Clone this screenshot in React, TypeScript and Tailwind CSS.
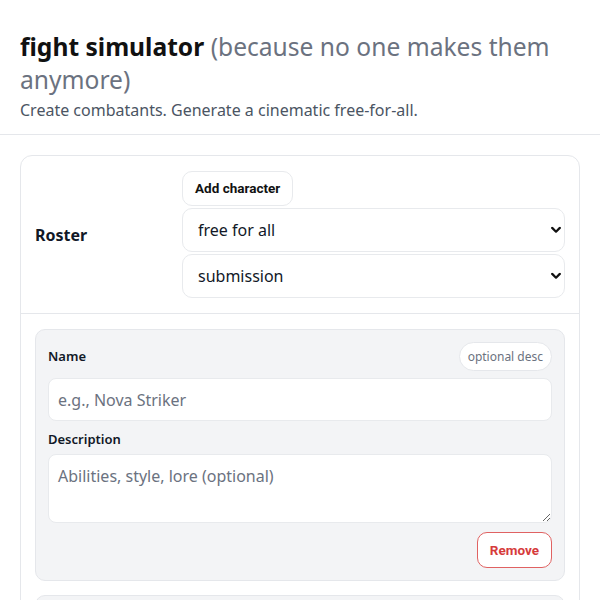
import React from "react";

const Chevron = () => (
  <svg
    className="pointer-events-none absolute right-[4px] top-1/2 -translate-y-1/2"
    width="10"
    height="7"
    viewBox="0 0 10 7"
    fill="none"
  >
    <path d="M1.2 1.4 5 5.2 8.8 1.4" stroke="#111" strokeWidth="2.2" strokeLinecap="round" strokeLinejoin="round" />
  </svg>
);

const Select = ({ value, options }: { value: string; options: string[] }) => (
  <div className="relative w-full">
    <select
      defaultValue={value}
      className="h-11 w-full appearance-none rounded-[10px] border border-[#e8eaed] bg-white pl-[15px] pr-8 text-base text-[#111827] outline-none"
    >
      {options.map((o) => (
        <option key={o}>{o}</option>
      ))}
    </select>
    <Chevron />
  </div>
);

const CharacterCard = () => (
  <div className="rounded-[10px] border border-[#e5e7eb] bg-[#f3f4f6] p-3">
    <div className="flex items-center justify-between">
      <label className="text-[13px] font-semibold text-[#111827]">Name</label>
      <button className="h-[29px] rounded-full border border-[#e5e7eb] bg-white px-2 text-xs text-[#6b7280]">
        optional desc
      </button>
    </div>
    <input
      placeholder="e.g., Nova Striker"
      className="mt-[7px] block h-[43px] w-full rounded-lg border border-[#e8eaed] bg-white pl-[9px] text-base outline-none placeholder:text-[#6b7280]"
    />
    <label className="mt-2 block text-[13px] font-semibold leading-5 text-[#111827]">Description</label>
    <textarea
      placeholder="Abilities, style, lore (optional)"
      className="mt-[5px] block h-[69px] w-full rounded-lg border border-[#e8eaed] bg-white px-[9px] py-[9px] text-base leading-6 outline-none placeholder:text-[#6b7280]"
    />
    <div className="mt-[9px] flex justify-end">
      <button className="h-9 rounded-[10px] border border-[#e06262] bg-white px-[12px] font-['Roboto',sans-serif] text-[13.5px] font-bold text-[#d63b3b]">
        Remove
      </button>
    </div>
  </div>
);

export default function App() {
  return (
    <div className="min-h-screen bg-white font-['Noto_Sans',sans-serif] text-[#111827]">
      <header className="border-b border-[#e5e7eb] px-5 pb-3 pt-[30px]">
        <h1 className="text-[24.6px] font-bold leading-[33px] text-[#111]">
          fight simulator{" "}
          <span className="font-normal text-[#6b7280]">(because no one makes them anymore)</span>
        </h1>
        <p className="mt-[2px] text-base leading-6 text-[#4b5563]">
          Create combatants. Generate a cinematic free-for-all.
        </p>
      </header>
      <main className="px-5 pt-5">
        <section className="rounded-xl border border-[#e5e7eb] bg-white">
          <div className="flex items-center border-b border-[#e5e7eb] px-[14px] py-[15px]">
            <h2 className="w-[147px] text-base font-bold">Roster</h2>
            <div className="flex flex-1 flex-col items-start gap-[2px]">
              <button className="h-[35px] rounded-[10px] border border-[#e8eaed] bg-white px-3 font-['Roboto',sans-serif] text-[13.5px] font-bold text-[#111]">
                Add character
              </button>
              <Select value="free for all" options={["free for all", "tournament", "1 vs 1"]} />
              <Select value="submission" options={["submission", "knockout", "last standing"]} />
            </div>
          </div>
          <div className="flex flex-col gap-[14px] px-[14px] pt-[15px] pb-[15px]">
            <CharacterCard />
            <CharacterCard />
          </div>
        </section>
      </main>
    </div>
  );
}
